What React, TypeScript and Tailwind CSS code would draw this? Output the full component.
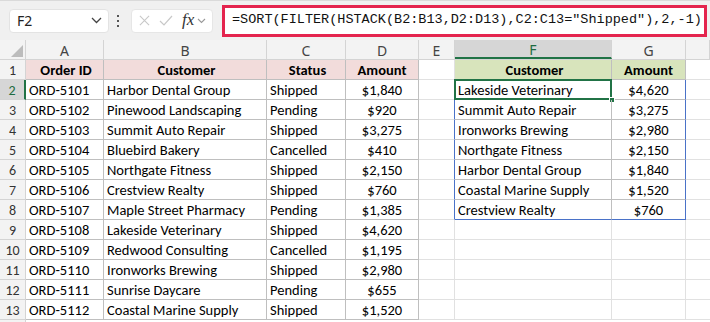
import React from "react";

const COLS = [
  { key: "A", w: "w-[78px]" },
  { key: "B", w: "w-[163px]" },
  { key: "C", w: "w-[79px]" },
  { key: "D", w: "w-[73px]" },
  { key: "E", w: "w-[36px]" },
  { key: "F", w: "w-[157px]" },
  { key: "G", w: "w-[74px]" },
  { key: "H", w: "flex-1" },
];

const ORDERS: [string, string, string, string][] = [
  ["ORD-5101", "Harbor Dental Group", "Shipped", "$1,840"],
  ["ORD-5102", "Pinewood Landscaping", "Pending", "$920"],
  ["ORD-5103", "Summit Auto Repair", "Shipped", "$3,275"],
  ["ORD-5104", "Bluebird Bakery", "Cancelled", "$410"],
  ["ORD-5105", "Northgate Fitness", "Shipped", "$2,150"],
  ["ORD-5106", "Crestview Realty", "Shipped", "$760"],
  ["ORD-5107", "Maple Street Pharmacy", "Pending", "$1,385"],
  ["ORD-5108", "Lakeside Veterinary", "Shipped", "$4,620"],
  ["ORD-5109", "Redwood Consulting", "Cancelled", "$1,195"],
  ["ORD-5110", "Ironworks Brewing", "Shipped", "$2,980"],
  ["ORD-5111", "Sunrise Daycare", "Pending", "$655"],
  ["ORD-5112", "Coastal Marine Supply", "Shipped", "$1,520"],
];

const SPILL: [string, string][] = [
  ["Lakeside Veterinary", "$4,620"],
  ["Summit Auto Repair", "$3,275"],
  ["Ironworks Brewing", "$2,980"],
  ["Northgate Fitness", "$2,150"],
  ["Harbor Dental Group", "$1,840"],
  ["Coastal Marine Supply", "$1,520"],
  ["Crestview Realty", "$760"],
];

const FONT = "font-['Calibri','Lato',sans-serif]";

function FormulaBar() {
  return (
    <div className="flex h-[40px] items-center bg-[#f0f0f0] border-t border-[#dadada] pl-[9px] pr-[3px]">
      <div className="flex h-[24px] w-[100px] items-center justify-between rounded-[4px] bg-white border border-[#e3e3e3] pl-[7px] pr-[6px]">
        <span className="font-['Segoe_UI','Noto_Sans',sans-serif] text-[14px] text-[#222]">F2</span>
        <svg width="11" height="7" viewBox="0 0 11 7" fill="none">
          <path d="M1 1l4.5 4.5L10 1" stroke="#444" strokeWidth="1.3" />
        </svg>
      </div>
      <div className="ml-[8px] mr-[12px] flex flex-col gap-[3px]">
        <span className="h-[2px] w-[2px] bg-[#555]" />
        <span className="h-[2px] w-[2px] bg-[#555]" />
        <span className="h-[2px] w-[2px] bg-[#555]" />
      </div>
      <div className="flex h-[24px] w-[82px] items-center rounded-[4px] bg-white border border-[#e6e6e6] pl-[7px] gap-[9px]">
        <svg width="11" height="11" viewBox="0 0 12 12" fill="none">
          <path d="M1 1l10 10M11 1L1 11" stroke="#c8c8c8" strokeWidth="1.2" />
        </svg>
        <svg width="14" height="11" viewBox="0 0 14 11" fill="none">
          <path d="M1 6l4 4L13 1" stroke="#c8c8c8" strokeWidth="1.2" />
        </svg>
        <span className="font-['Liberation_Serif',serif] italic text-[17px] leading-none text-[#333] -mt-[2px]">
          fx
        </span>
        <svg width="9" height="6" viewBox="0 0 9 6" fill="none" className="-ml-[6px]">
          <path d="M1 1l3.5 3.5L8 1" stroke="#999" strokeWidth="1.1" />
        </svg>
      </div>
      <div className="ml-[9px] flex h-[32px] flex-1 items-center border-[3px] border-[#e4244e] bg-white pl-[7px]">
        <span className="font-['Liberation_Mono',monospace] text-[13.5px] text-[#111] whitespace-nowrap">
          =SORT(FILTER(HSTACK(B2:B13,D2:D13),C2:C13="Shipped"),2,-1)
        </span>
      </div>
    </div>
  );
}

function ColumnHeaders() {
  return (
    <div className="flex h-[20px] bg-[#f3f3f3] border-b border-[#d4d4d4]">
      <div className="relative w-[26px] border-r border-[#d4d4d4]">
        <svg width="12" height="12" viewBox="0 0 12 12" className="absolute right-[2px] bottom-[2px]">
          <path d="M12 0L12 12L0 12Z" fill="#bcbcbc" />
        </svg>
      </div>
      {COLS.map((c) => (
        <div
          key={c.key}
          className={`${c.w} flex items-center justify-center pt-[2px] border-r border-[#d4d4d4] text-[14px] ${
            c.key === "F"
              ? "bg-[#d6d6d6] text-[#1e6b40] border-b-2 border-b-[#217346]"
              : "text-[#444]"
          }`}
        >
          {c.key === "H" ? "" : c.key}
        </div>
      ))}
    </div>
  );
}

function Row({ n }: { n: number }) {
  const isHead = n === 1;
  const order = !isHead ? ORDERS[n - 2] : null;
  const spillIdx = n - 2;
  const spill = spillIdx >= 0 && spillIdx < SPILL.length ? SPILL[spillIdx] : null;
  const inSpill = spill !== null;
  const lastSpill = spillIdx === SPILL.length - 1;

  const tbl = "border-r border-b border-[#bfbfbf]";
  const pink = "bg-[#f2dcdb] font-bold justify-center";
  const green = "bg-[#d8e4bc] font-bold justify-center";

  return (
    <div className={`flex h-[20px] ${FONT} text-[14.5px] text-black`}>
      <div
        className={`w-[26px] flex items-center justify-center pt-[2px] border-b border-[#d4d4d4] text-[14px] ${
          n === 2
            ? "bg-[#d6d6d6] text-[#1e6b40] border-r-2 border-r-[#217346]"
            : "bg-[#f3f3f3] text-[#333] border-r border-[#d4d4d4]"
        }`}
      >
        {n}
      </div>
      <div className={`w-[78px] flex items-center pt-[2px] pl-[3px] ${tbl} ${isHead ? pink : ""}`}>
        {isHead ? "Order ID" : order![0]}
      </div>
      <div className={`w-[163px] flex items-center pt-[2px] pl-[3px] ${tbl} ${isHead ? pink : ""}`}>
        {isHead ? "Customer" : order![1]}
      </div>
      <div className={`w-[79px] flex items-center pt-[2px] pl-[3px] ${tbl} ${isHead ? pink : ""}`}>
        {isHead ? "Status" : order![2]}
      </div>
      <div className={`w-[73px] flex items-center justify-center pt-[2px] ${tbl} ${isHead ? pink : ""}`}>
        {isHead ? "Amount" : order![3]}
      </div>
      <div
        className={`w-[36px] border-b border-[#e1e1e1] ${
          inSpill ? "border-r border-r-[#4a72c8]" : "border-r border-[#e1e1e1]"
        }`}
      />
      <div
        className={`relative w-[157px] flex items-center pt-[2px] pl-[3px] border-r ${
          isHead
            ? `${green} border-b border-[#bfbfbf]`
            : inSpill
            ? `border-[#bfbfbf] border-b ${lastSpill ? "border-b-[#4a72c8]" : ""}`
            : "border-[#e1e1e1] border-b"
        }`}
      >
        {isHead ? "Customer" : spill ? spill[0] : ""}
        {n === 2 && (
          <>
            <span className="absolute -left-[1px] -top-[1px] -right-[1px] -bottom-[1px] border-2 border-[#217346]" />
            <span className="absolute -right-[4px] -bottom-[4px] h-[6px] w-[6px] bg-[#217346] border border-white" />
          </>
        )}
      </div>
      <div
        className={`w-[74px] flex items-center justify-center pt-[2px] border-r ${
          isHead
            ? `${green} border-b border-[#bfbfbf]`
            : inSpill
            ? `border-r-[#4a72c8] border-b ${lastSpill ? "border-b-[#4a72c8]" : "border-b-[#bfbfbf]"}`
            : "border-[#e1e1e1] border-b"
        }`}
      >
        {isHead ? "Amount" : spill ? spill[1] : ""}
      </div>
      <div className="flex-1 border-b border-[#e1e1e1]" />
    </div>
  );
}

export default function App() {
  const rows = Array.from({ length: 13 }, (_, i) => i + 1);
  return (
    <div className="w-[710px] h-[322px] overflow-hidden bg-white">
      <FormulaBar />
      <ColumnHeaders />
      {rows.map((n) => (
        <Row key={n} n={n} />
      ))}
      <div className="flex h-[20px]">
        <div className="w-[26px] bg-[#f3f3f3] border-r border-[#d4d4d4]" />
      </div>
    </div>
  );
}
